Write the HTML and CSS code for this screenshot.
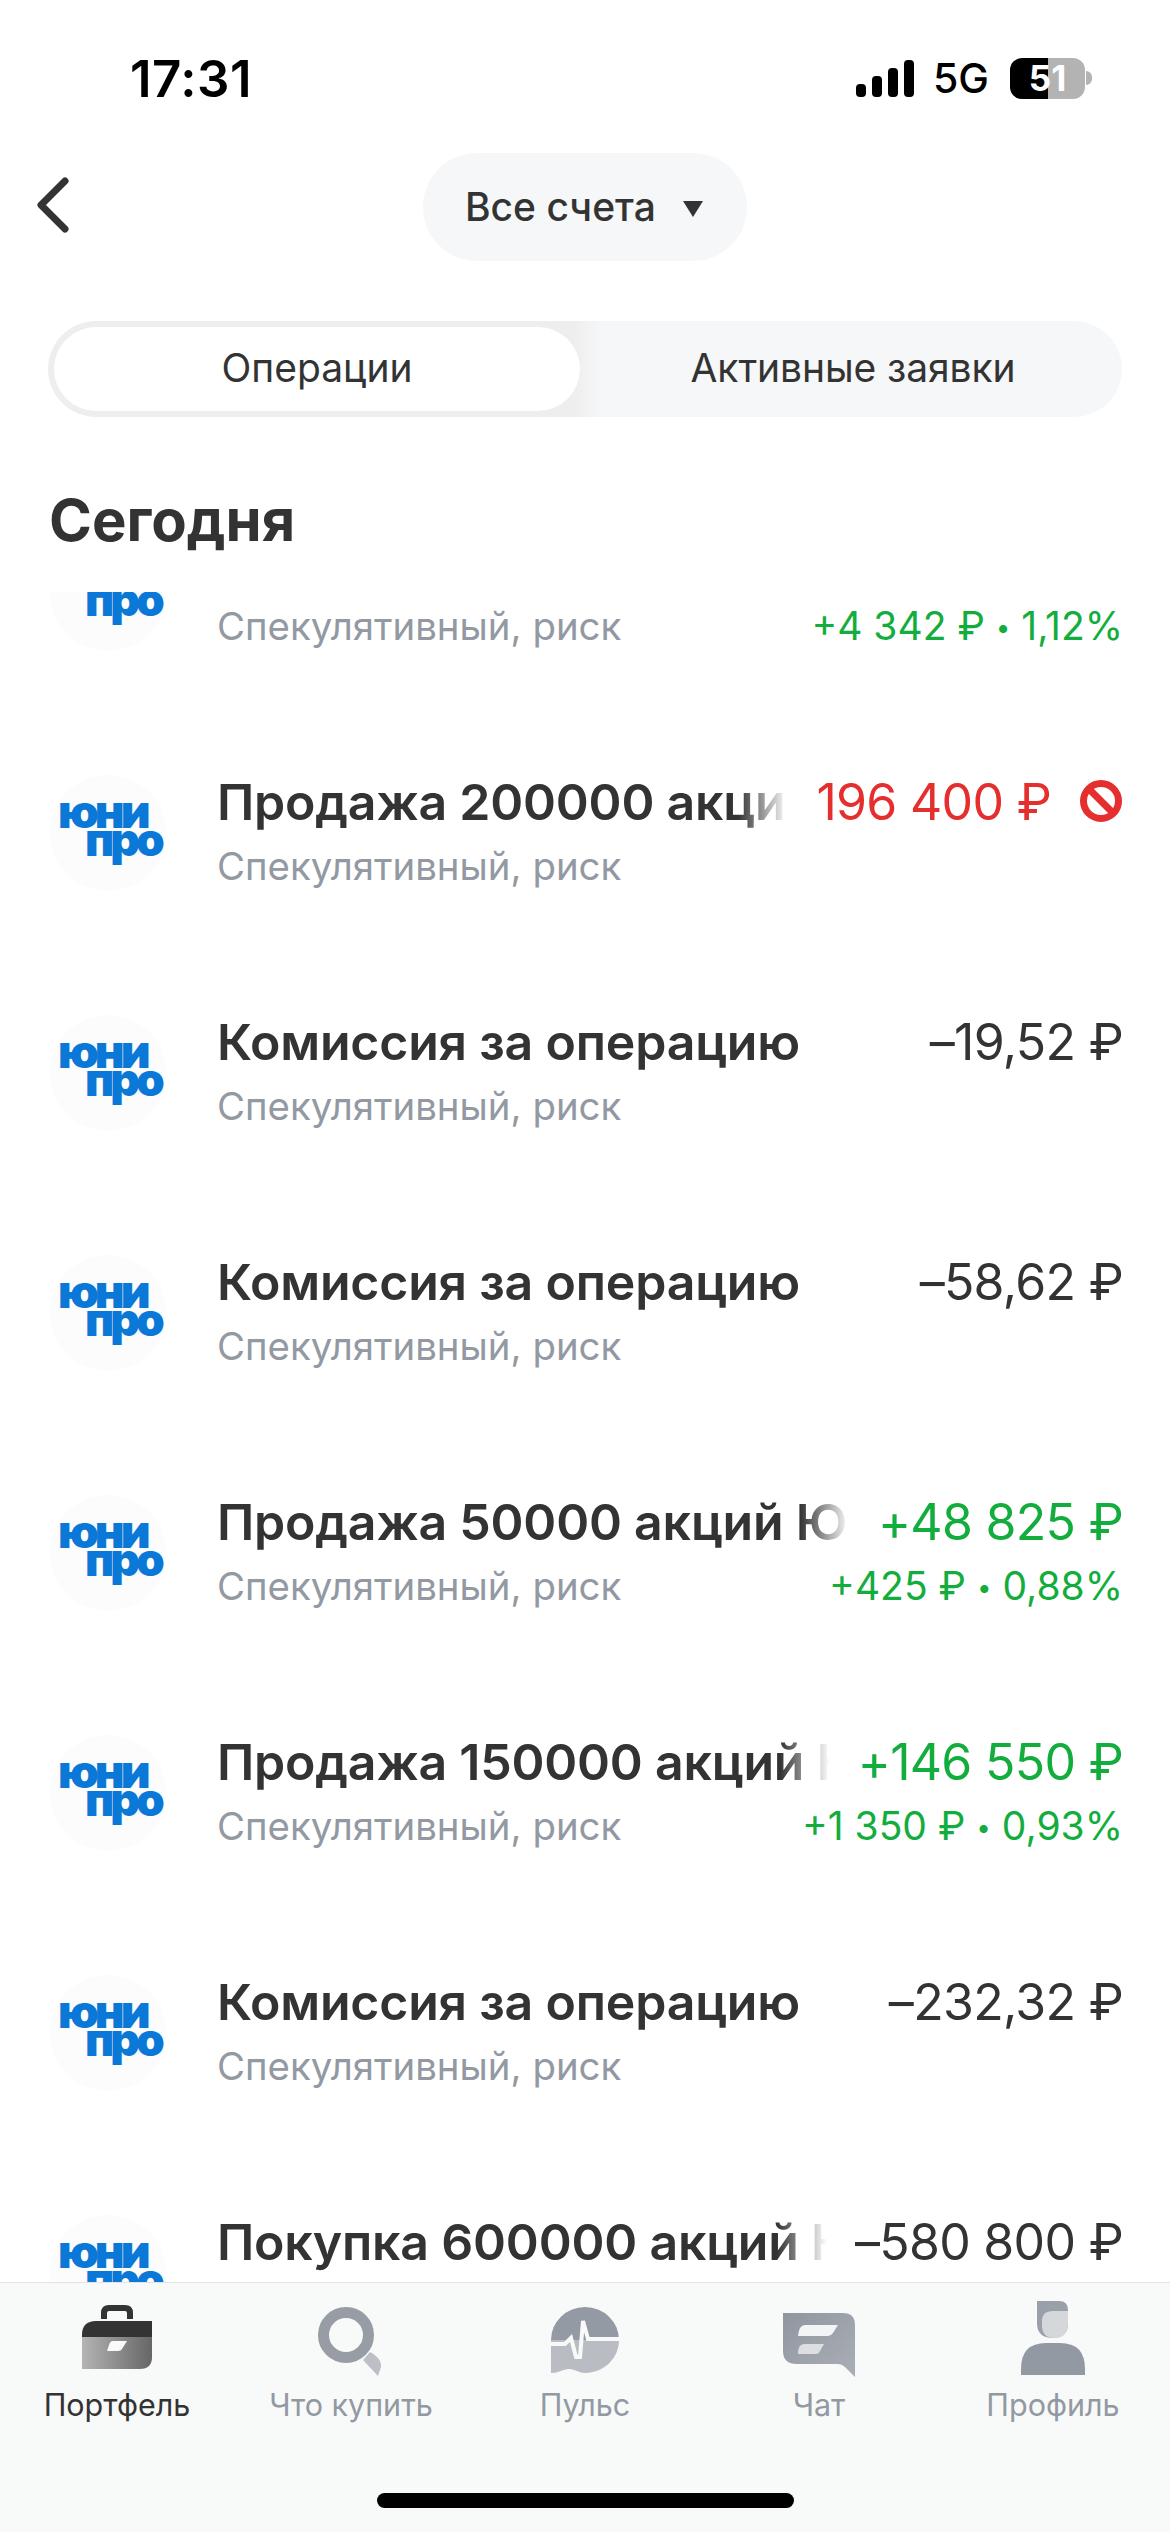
FILE: index.html
```html
<!DOCTYPE html>
<html lang="ru">

<head>
    <meta charset="UTF-8">
    <meta name="viewport" content="width=device-width, initial-scale=1.0">
    <title>Операции</title>
    <link rel="stylesheet" href="styles.css">
</head>

<body>
    <div class="page">
        <div class="status">
            <span class="time">17:31</span>
            <div class="status_right">
                <svg class="signal" width="58" height="37" viewBox="0 0 58 37">
                    <rect x="0" y="24" width="10" height="13" rx="4" />
                    <rect x="16" y="16" width="10" height="21" rx="4" />
                    <rect x="32" y="8" width="10" height="29" rx="4" />
                    <rect x="48" y="0" width="10" height="37" rx="4" />
                </svg>
                <span class="net">5G</span>
                <div class="battery_wrap">
                    <div class="battery">51</div>
                    <div class="battery_nub"></div>
                </div>
            </div>
        </div>

        <div class="nav">
            <svg class="back" width="33" height="56" viewBox="0 0 33 56">
                <path d="M29 4 L5 28 L29 52" />
            </svg>
            <div class="account">
                <span>Все счета</span>
                <span class="arrow"></span>
            </div>
        </div>

        <div class="tabs">
            <div class="tab tab_active">Операции</div>
            <div class="tab">Активные заявки</div>
        </div>

        <h1 class="day">Сегодня</h1>

        <div class="list">
            <div class="list_inner">
                <div class="row">
                    <div class="logo"><span class="logo_a">юни</span><span class="logo_b">про</span></div>
                    <div class="body">
                        <div class="line">
                            <div class="title">&nbsp;</div>
                        </div>
                        <div class="line">
                            <div class="sub">Спекулятивный, риск</div>
                            <div class="extra green">+4 342 ₽ <span class="dot">•</span> 1,12%</div>
                        </div>
                    </div>
                </div>

                <div class="row">
                    <div class="logo"><span class="logo_a">юни</span><span class="logo_b">про</span></div>
                    <div class="body">
                        <div class="line">
                            <div class="title">Продажа 200000 акций Юнипро</div>
                            <div class="sum red">196 400 ₽</div>
                            <svg class="blocked" width="44" height="44" viewBox="0 0 44 44">
                                <circle cx="22" cy="22" r="17.5" />
                                <path d="M10 10 L34 34" />
                            </svg>
                        </div>
                        <div class="line">
                            <div class="sub">Спекулятивный, риск</div>
                        </div>
                    </div>
                </div>

                <div class="row">
                    <div class="logo"><span class="logo_a">юни</span><span class="logo_b">про</span></div>
                    <div class="body">
                        <div class="line">
                            <div class="title">Комиссия за операцию</div>
                            <div class="sum">–19,52 ₽</div>
                        </div>
                        <div class="line">
                            <div class="sub">Спекулятивный, риск</div>
                        </div>
                    </div>
                </div>

                <div class="row">
                    <div class="logo"><span class="logo_a">юни</span><span class="logo_b">про</span></div>
                    <div class="body">
                        <div class="line">
                            <div class="title">Комиссия за операцию</div>
                            <div class="sum">–58,62 ₽</div>
                        </div>
                        <div class="line">
                            <div class="sub">Спекулятивный, риск</div>
                        </div>
                    </div>
                </div>

                <div class="row">
                    <div class="logo"><span class="logo_a">юни</span><span class="logo_b">про</span></div>
                    <div class="body">
                        <div class="line">
                            <div class="title">Продажа 50000 акций Юнипро</div>
                            <div class="sum green">+48 825 ₽</div>
                        </div>
                        <div class="line">
                            <div class="sub">Спекулятивный, риск</div>
                            <div class="extra green">+425 ₽ <span class="dot">•</span> 0,88%</div>
                        </div>
                    </div>
                </div>

                <div class="row">
                    <div class="logo"><span class="logo_a">юни</span><span class="logo_b">про</span></div>
                    <div class="body">
                        <div class="line">
                            <div class="title">Продажа 150000 акций Юнипро</div>
                            <div class="sum green">+146 550 ₽</div>
                        </div>
                        <div class="line">
                            <div class="sub">Спекулятивный, риск</div>
                            <div class="extra green">+1 350 ₽ <span class="dot">•</span> 0,93%</div>
                        </div>
                    </div>
                </div>

                <div class="row">
                    <div class="logo"><span class="logo_a">юни</span><span class="logo_b">про</span></div>
                    <div class="body">
                        <div class="line">
                            <div class="title">Комиссия за операцию</div>
                            <div class="sum">–232,32 ₽</div>
                        </div>
                        <div class="line">
                            <div class="sub">Спекулятивный, риск</div>
                        </div>
                    </div>
                </div>

                <div class="row">
                    <div class="logo"><span class="logo_a">юни</span><span class="logo_b">про</span></div>
                    <div class="body">
                        <div class="line">
                            <div class="title">Покупка 600000 акций Юнипро</div>
                            <div class="sum">–580 800 ₽</div>
                        </div>
                        <div class="line">
                            <div class="sub">Спекулятивный, риск</div>
                        </div>
                    </div>
                </div>
            </div>
        </div>

        <div class="tabbar">
            <div class="menu">
                <div class="menu_item menu_active">
                    <div class="menu_icon">
                        <svg class="icon_case" width="70" height="64" viewBox="0 0 70 64">
                            <defs>
                                <linearGradient id="case_g" x1="0" y1="0" x2="1" y2="0">
                                    <stop offset="0" stop-color="#b4b4b4" />
                                    <stop offset="1" stop-color="#666" />
                                </linearGradient>
                            </defs>
                            <path d="M22 14 V8 Q22 3 27 3 H43 Q48 3 48 8 V14" fill="none" stroke="#333" stroke-width="6" />
                            <path d="M0 32 V30 Q0 16 14 16 H70 V32 Z" fill="#333" />
                            <path d="M0 32 H70 V52 Q70 64 58 64 H0 Z" fill="url(#case_g)" />
                            <path d="M31 36 H45 L40 44 Q39 46 36 46 H25 L27 40 Q28 36 31 36 Z" fill="#f8f9f9" />
                        </svg>
                    </div>
                    <div class="menu_label">Портфель</div>
                </div>
                <div class="menu_item">
                    <div class="menu_icon">
                        <svg class="icon_search" width="63" height="69" viewBox="0 0 63 69">
                            <path d="M52 45 C58 48 64 54 63 60 L60 69 L45 53 Z" fill="#bcc0c6" />
                            <circle cx="28" cy="28" r="22.5" fill="none" stroke="#979ca5" stroke-width="11" />
                        </svg>
                    </div>
                    <div class="menu_label">Что купить</div>
                </div>
                <div class="menu_item">
                    <div class="menu_icon">
                        <svg class="icon_pulse" width="68" height="66" viewBox="0 0 68 66">
                            <path d="M0 33 A34 33 0 0 1 68 33 Z" fill="#949aa3" />
                            <path d="M0 33 H68 C68 52 52 66 34 66 C28 66 24 62 18 62 C12 62 8 66 0 66 Z" fill="#b9bdc3" />
                            <path d="M0 37 H14 L20 31 L25 50 H29 L32 14 L37 32 H68" fill="none" stroke="#f8f9f9" stroke-width="4" />
                        </svg>
                    </div>
                    <div class="menu_label">Пульс</div>
                </div>
                <div class="menu_item">
                    <div class="menu_icon">
                        <svg class="icon_chat" width="72" height="64" viewBox="0 0 72 64">
                            <defs>
                                <linearGradient id="chat_g" x1="0" y1="0" x2="1" y2="1">
                                    <stop offset="0" stop-color="#9096a0" />
                                    <stop offset="1" stop-color="#aaafb6" />
                                </linearGradient>
                            </defs>
                            <path d="M0 0 H60 Q72 0 72 12 V64 L62 54 Q59 51 55 51 H14 Q0 51 0 38 Z" fill="url(#chat_g)" />
                            <path d="M22 12 H55 L50 20 Q48 23 45 23 H15 Q16 12 22 12 Z" fill="#f3f4f5" />
                            <path d="M21 31 H41 L37 38 Q36 41 33 41 H15 Q15 31 21 31 Z" fill="#dcdee1" />
                        </svg>
                    </div>
                    <div class="menu_label">Чат</div>
                </div>
                <div class="menu_item">
                    <div class="menu_icon">
                        <svg class="icon_user" width="64" height="74" viewBox="0 0 64 74">
                            <path d="M16 0 H38 Q47 0 47 9 V22 Q47 37 32 37 Q16 37 16 22 Z" fill="#9aa0a9" />
                            <path d="M21 20 Q21 10 32 10 H47 V22 Q47 37 33 37 Q21 37 21 24 Z" fill="#d5d8db" />
                            <path d="M0 74 V68 Q0 42 25 42 H39 Q64 42 64 68 V74 Z" fill="#9299a2" />
                        </svg>
                    </div>
                    <div class="menu_label">Профиль</div>
                </div>
            </div>
            <div class="home_line"></div>
        </div>
    </div>
</body>

</html>
```

FILE: styles.css
```css
* {
    margin: 0;
    padding: 0;
    box-sizing: border-box;
}

body {
    background-color: #fff;
    font-family: "Inter", "Noto Sans", sans-serif;
    color: #333;
}

.page {
    display: flex;
    flex-direction: column;
    width: 1170px;
    height: 2532px;
    overflow: hidden;
}

/* status bar */
.status {
    display: flex;
    flex: none;
    justify-content: space-between;
    align-items: center;
    height: 153px;
    padding: 3px 78px 0 130px;
    color: #000;
}

.time {
    font-size: 51px;
    font-weight: 600;
    letter-spacing: 0.5px;
}

.status_right {
    display: flex;
    align-items: center;
    gap: 21px;
}

.signal {
    margin-right: -2px;
}

.net {
    font-size: 41px;
    font-weight: 500;
}

.battery_wrap {
    display: flex;
    align-items: center;
    gap: 1px;
}

.battery {
    width: 75px;
    height: 41px;
    border-radius: 12px;
    background: linear-gradient(to right, #000 38px, #b3b3b3 38px);
    text-align: center;
    line-height: 41px;
    font-size: 35px;
    font-weight: 700;
    color: #fff;
}

.battery_nub {
    width: 6px;
    height: 14px;
    border-radius: 0 6px 6px 0;
    background-color: #b3b3b3;
}

/* top nav */
.nav {
    display: grid;
    flex: none;
    grid-template-columns: 1fr auto 1fr;
    align-items: center;
    height: 108px;
}

.back {
    margin-left: 36px;
    margin-top: -4px;
    fill: none;
    stroke: #333;
    stroke-width: 7;
    stroke-linecap: round;
    stroke-linejoin: round;
}

.account {
    display: flex;
    align-items: center;
    gap: 27px;
    width: 324px;
    height: 108px;
    padding: 0 0 2px 42px;
    border-radius: 54px;
    background-color: #f6f7f8;
    font-size: 39px;
    font-weight: 500;
}

.arrow {
    width: 0;
    height: 0;
    margin-top: 6px;
    border-top: 16px solid #333;
    border-left: 10px solid transparent;
    border-right: 10px solid transparent;
}

/* tabs */
.tabs {
    display: flex;
    flex: none;
    height: 96px;
    margin: 60px 48px 0;
    padding: 6px;
    border-radius: 48px;
    background: linear-gradient(to right, #eeeeef 525px, #f6f7f8 555px);
    font-size: 39px;
}

.tab {
    display: flex;
    flex: 1;
    justify-content: center;
    align-items: center;
    padding: 0 0 3px 10px;
    letter-spacing: -0.1px;
}

.tab_active {
    flex: none;
    width: 526px;
    padding-left: 0;
    border-radius: 42px;
    background-color: #fff;
    letter-spacing: 0;
}

.day {
    flex: none;
    margin: 65px 0 34px 49px;
    line-height: 76px;
    font-size: 58px;
    font-weight: 700;
}

/* operations */
.list {
    flex: 1;
    min-height: 0;
    overflow: hidden;
}

.list_inner {
    margin-top: -119px;
}

.row {
    display: flex;
    align-items: center;
    height: 240px;
    padding: 0 47px 0 50px;
}

.logo {
    display: flex;
    flex: none;
    flex-direction: column;
    justify-content: center;
    width: 116px;
    height: 116px;
    margin-right: 51px;
    padding-bottom: 16px;
    border-radius: 50%;
    background-color: #fcfcfd;
    line-height: 28px;
    font-size: 46px;
    font-weight: 900;
    letter-spacing: -4px;
    color: #0a78d6;
}

.logo_a {
    margin-left: 8px;
}

.logo_b {
    margin-left: 35px;
}

.body {
    flex: 1;
    min-width: 0;
}

.line {
    display: flex;
    align-items: center;
    gap: 28px;
    height: 65px;
}

.title {
    flex: 1;
    min-width: 0;
    overflow: hidden;
    white-space: nowrap;
    padding-top: 2px;
    font-size: 50px;
    font-weight: 600;
    letter-spacing: -0.2px;
    -webkit-mask-image: linear-gradient(to right, #000 calc(100% - 50px), transparent);
    mask-image: linear-gradient(to right, #000 calc(100% - 50px), transparent);
}

.sum {
    flex: none;
    white-space: nowrap;
    padding-top: 2px;
    font-size: 50px;
    letter-spacing: -0.7px;
}

.sub {
    flex: 1;
    white-space: nowrap;
    font-size: 38.4px;
    color: #9299a2;
}

.extra {
    flex: none;
    white-space: nowrap;
    font-size: 39px;
}

.dot {
    font-size: 26px;
    vertical-align: 3px;
}

.green {
    color: #13ad3e;
}

.red {
    color: #e52e2e;
}

.blocked {
    flex: none;
    fill: none;
    stroke: #e52e2e;
    stroke-width: 7;
}

/* bottom menu */
.tabbar {
    flex: none;
    height: 250px;
    padding-top: 17px;
    border-top: 1px solid #e2e3e4;
    background-color: #f8f9f9;
}

.menu {
    display: grid;
    grid-template-columns: repeat(5, 1fr);
}

.menu_item {
    display: flex;
    flex-direction: column;
    align-items: center;
}

.menu_icon {
    display: flex;
    align-items: flex-start;
    height: 80px;
}

.icon_case {
    margin-top: 5px;
}

.icon_search {
    margin: 7px 0 0 -3px;
}

.icon_pulse {
    margin-top: 7px;
}

.icon_chat {
    margin-top: 13px;
}

.icon_user {
    margin-top: 1px;
}

.menu_label {
    line-height: 50px;
    font-size: 30.5px;
    color: #9299a2;
}

.menu_active .menu_label {
    color: #333;
}

.home_line {
    width: 417px;
    height: 15px;
    margin: 63px auto 0;
    border-radius: 8px;
    background-color: #000;
}
```
